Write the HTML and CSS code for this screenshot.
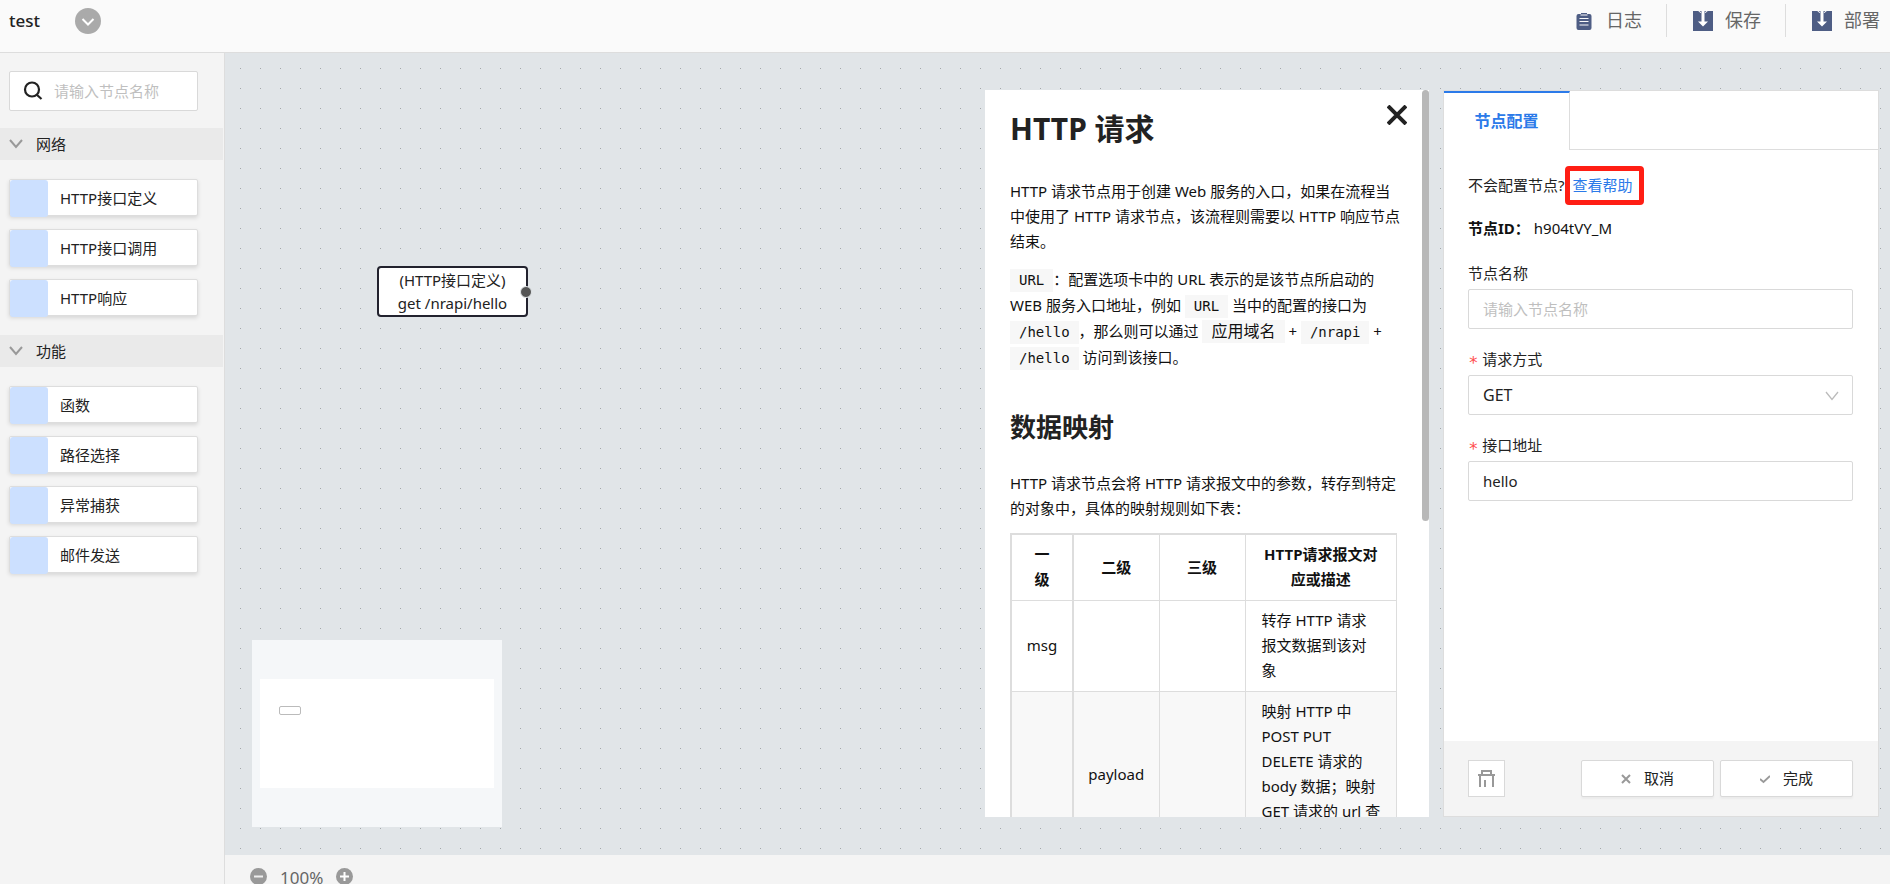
FILE: index.html
```html
<!DOCTYPE html>
<html lang="zh-CN">
<head>
<meta charset="utf-8">
<title>test</title>
<link rel="stylesheet" href="styles.css">
</head>
<body>
<header class="topbar">
  <div class="flow-title">
    <span class="flow-name">test</span>
    <button class="icon-button" aria-label="展开">
      <svg width="26" height="26" viewBox="0 0 26 26"><circle cx="13" cy="13" r="13" fill="#aaa"/><path d="M7.500 11l5.500 5.500 5.500-5.500" fill="none" stroke="#fff" stroke-width="2"/></svg>
    </button>
  </div>
  <nav class="actions">
    <button class="action action-log">
      <svg width="16" height="18" viewBox="0 0 16 18"><path d="M2.500 2H5V1h6v1h2.500A2 2 0 0 1 15.500 4v12a2 2 0 0 1-2 2h-11a2 2 0 0 1-2-2V4a2 2 0 0 1 2-2z" fill="#4e5d84"/><path d="M4.500 3h7M3.500 6.500h9M3.500 9.500h9M3.500 13h9" stroke="#fafafa" stroke-width="1.200"/></svg>
      日志
    </button>
    <button class="action">
      <svg width="20" height="20" viewBox="0 0 20 20"><path d="M0 0h20v20H0z" fill="#4e5d84"/><path d="M5.500 0Q7.500 0 7.500 2M14.500 0Q12.500 0 12.500 2" fill="none" stroke="#fafafa"/><path d="M8.500 0h3v10.500h3.500l-5 5-5-5h3.500z" fill="#fff"/></svg>
      保存
    </button>
    <button class="action">
      <svg width="20" height="20" viewBox="0 0 20 20"><path d="M0 0h20v20H0z" fill="#4e5d84"/><path d="M5.500 0Q7.500 0 7.500 2M14.500 0Q12.500 0 12.500 2" fill="none" stroke="#fafafa"/><path d="M8.500 0h3v10.500h3.500l-5 5-5-5h3.500z" fill="#fff"/></svg>
      部署
    </button>
  </nav>
</header>
<div class="workspace">
  <aside class="sidebar">
    <label class="search">
      <svg width="20" height="20" viewBox="0 0 20 20"><circle cx="9" cy="8.500" r="7" fill="none" stroke="#222" stroke-width="2.200"/><path d="M13.500 13.500l5 4.500" stroke="#222" stroke-width="2.200"/></svg>
      <input class="search-input" type="text" placeholder="请输入节点名称" aria-label="请输入节点名称">
    </label>
    <section>
      <h2 class="category"><svg width="14" height="10" viewBox="0 0 14 10"><path d="M1 1l6 7 6-7" fill="none" stroke="#999" stroke-width="2"/></svg>网络</h2>
      <ul class="node-list">
        <li class="node-item">HTTP接口定义</li>
        <li class="node-item">HTTP接口调用</li>
        <li class="node-item">HTTP响应</li>
      </ul>
    </section>
    <section>
      <h2 class="category"><svg width="14" height="10" viewBox="0 0 14 10"><path d="M1 1l6 7 6-7" fill="none" stroke="#999" stroke-width="2"/></svg>功能</h2>
      <ul class="node-list">
        <li class="node-item">函数</li>
        <li class="node-item">路径选择</li>
        <li class="node-item">异常捕获</li>
        <li class="node-item">邮件发送</li>
      </ul>
    </section>
  </aside>
  <main class="stage">
    <div class="canvas">
      <div class="flow-node"><span>(HTTP接口定义)</span><span>get /nrapi/hello</span><i class="port"></i></div>
      <div class="minimap"><div class="minimap-view"><i class="minimap-node"></i></div></div>
      <article class="help">
        <button class="icon-button help-close" aria-label="关闭">
          <svg width="20" height="20" viewBox="0 0 20 20"><path d="M1 1l18 18M19 1L1 19" stroke="#222" stroke-width="4"/></svg>
        </button>
        <div class="help-body">
          <h1 class="help-title">HTTP 请求</h1>
          <p class="help-text">HTTP 请求节点用于创建 Web 服务的入口，如果在流程当<br>中使用了 HTTP 请求节点，该流程则需要以 HTTP 响应节点<br>结束。</p>
          <p class="help-text help-text-code"><code>URL</code>：配置选项卡中的 URL 表示的是该节点所启动的<br>WEB 服务入口地址，例如 <code>URL</code> 当中的配置的接口为<br><code>/hello</code>，那么则可以通过 <code class="code-wide">应用域名</code> + <code>/nrapi</code> +<br><code>/hello</code> 访问到该接口。</p>
          <h2 class="help-subtitle">数据映射</h2>
          <p class="help-text">HTTP 请求节点会将 HTTP 请求报文中的参数，转存到特定<br>的对象中，具体的映射规则如下表：</p>
          <table class="mapping">
            <colgroup><col class="col-one"><col class="col-two"><col class="col-two"><col></colgroup>
            <thead><tr><th>一<br>级</th><th>二级</th><th>三级</th><th>HTTP请求报文对<br>应或描述</th></tr></thead>
            <tbody>
              <tr><td>msg</td><td></td><td></td><td class="desc">转存 HTTP 请求<br>报文数据到该对<br>象</td></tr>
              <tr><td></td><td>payload</td><td></td><td class="desc">映射 HTTP 中<br>POST PUT<br>DELETE 请求的<br>body 数据；映射<br>GET 请求的 url 查<br>询参数</td></tr>
            </tbody>
          </table>
        </div>
        <i class="scroll-thumb"></i>
      </article>
      <form class="config">
        <div class="tabs"><button type="button" class="tab">节点配置</button><span class="tabs-rest"></span></div>
        <div class="config-body">
          <p class="hint">不会配置节点?<a class="help-link" href="#help">查看帮助</a></p>
          <p class="node-id"><strong>节点ID：</strong><span>h904tVY_M</span></p>
          <div class="field">
            <label for="node-name">节点名称</label>
            <input class="control" id="node-name" type="text" placeholder="请输入节点名称">
          </div>
          <div class="field">
            <label class="required" for="method">请求方式</label>
            <div class="select-wrap">
              <select class="control control-select" id="method"><option>GET</option></select>
              <svg class="select-arrow" width="14" height="10" viewBox="0 0 14 10"><path d="M1 1l6 7.500 6-7.500" fill="none" stroke="#bbb" stroke-width="1.300"/></svg>
            </div>
          </div>
          <div class="field">
            <label class="required" for="path">接口地址</label>
            <input class="control" id="path" type="text" value="hello">
          </div>
        </div>
        <div class="config-footer">
          <button type="button" class="button button-trash" aria-label="删除">
            <svg width="17" height="17" viewBox="0 0 17 17" fill="none" stroke="#999" stroke-width="2"><path d="M0 5h17M4 5V1h9v4M2 5v12M15 5v12M7 10v7"/></svg>
          </button>
          <button type="button" class="button button-wide">
            <svg width="10" height="10" viewBox="0 0 10 10"><path d="M1 1l8 8M9 1L1 9" stroke="#999" stroke-width="2"/></svg>取消
          </button>
          <button type="button" class="button button-wide">
            <svg width="10" height="10" viewBox="0 0 10 10"><path d="M0 5l3.500 3L10 2" fill="none" stroke="#999" stroke-width="1.800"/></svg>完成
          </button>
        </div>
      </form>
    </div>
    <footer class="zoombar">
      <button class="icon-button" aria-label="缩小"><svg width="17" height="17" viewBox="0 0 17 17"><circle cx="8.500" cy="8.500" r="8.500" fill="#999"/><path d="M4 8.500h9" stroke="#eee" stroke-width="2"/></svg></button>
      <span class="zoom-value">100%</span>
      <button class="icon-button" aria-label="放大"><svg width="17" height="17" viewBox="0 0 17 17"><circle cx="8.500" cy="8.500" r="8.500" fill="#999"/><path d="M4 8.500h9M8.500 4v9" stroke="#fff" stroke-width="2"/></svg></button>
    </footer>
  </main>
</div>
</body>
</html>
```
FILE: styles.css
```css
* { box-sizing: border-box; }

body {
  margin: 0;
  height: 100vh;
  display: flex;
  flex-direction: column;
  overflow: hidden;
  font: 15px/25px "Noto Sans", "Noto Sans CJK SC", sans-serif;
  color: #222;
  background: #f4f4f4;
}

h1, h2, p, ul { margin: 0; padding: 0; }
button, input, select { font: inherit; color: inherit; }
svg { flex: none; display: block; }
.icon-button { border: 0; padding: 0; background: none; }

.topbar {
  flex: none;
  display: flex;
  justify-content: space-between;
  align-items: flex-start;
  height: 53px;
  padding: 4px 10px 0 9px;
  border-bottom: 1px solid #ddd;
  background: #fafafa;
}
.flow-title { display: flex; align-items: center; gap: 35px; height: 33px; }
.flow-name { font-size: 17px; font-weight: 500; }
.actions { display: flex; }
.action {
  display: flex;
  align-items: center;
  gap: 12px;
  height: 33px;
  padding: 0 0 0 26px;
  border: 0;
  background: none;
  font-size: 18px;
  color: #666;
}
.action-log { gap: 14px; }
.action + .action { border-left: 1px solid #ddd; }
.action:not(:last-child) { padding-right: 24px; }

.workspace { flex: 1; display: flex; min-height: 0; }
.sidebar { flex: none; width: 225px; border-right: 1px solid #ddd; }
.search {
  display: flex;
  align-items: center;
  gap: 11px;
  width: 189px;
  height: 40px;
  margin: 18px 0 17px 9px;
  padding-left: 13px;
  border: 1px solid #d9d9d9;
  border-radius: 2px;
  background: #fff;
}
.search-input { width: 130px; padding: 0; border: 0; outline: 0; background: none; }
::placeholder { color: #bfbfbf; opacity: 1; }
.category {
  display: flex;
  align-items: center;
  gap: 13px;
  width: 223px;
  height: 32px;
  padding-left: 9px;
  background: #eaeaea;
  font-size: 15px;
  font-weight: 400;
}
.node-list {
  display: flex;
  flex-direction: column;
  gap: 13px;
  padding: 19px 26px 19px 9px;
  list-style: none;
}
.node-item {
  display: flex;
  align-items: center;
  gap: 12px;
  height: 37px;
  padding-top: 1px;
  border: 1px solid #ddd;
  border-radius: 2px;
  background: #fff;
  box-shadow: 0 2px 4px rgba(0, 0, 0, 0.12);
}
.node-item::before {
  content: "";
  width: 38px;
  height: 37px;
  border-radius: 3px;
  background: #cce0ff;
}

.stage { flex: 1; display: flex; flex-direction: column; min-width: 0; }
.canvas {
  position: relative;
  flex: 1;
  display: flex;
  justify-content: flex-end;
  gap: 14px;
  min-height: 0;
  padding: 37px 11px 38px;
  background-color: #e1e5e8;
  background-image:
    linear-gradient(#e1e5e8 19px, transparent 19px),
    linear-gradient(90deg, #e1e5e8 19px, #a4a8ab 19px);
  background-size: 20px 20px;
  background-position: -4px -4px;
}
.flow-node {
  position: absolute;
  left: 152px;
  top: 213px;
  display: flex;
  flex-direction: column;
  align-items: center;
  width: 151px;
  padding-top: 1px;
  border: 2px solid #22222e;
  border-radius: 4px;
  background: #fff;
  line-height: 23px;
}
.port {
  position: absolute;
  right: -6px;
  top: 18px;
  width: 12px;
  height: 12px;
  border: 1px solid #e1e5e8;
  border-radius: 50%;
  background: #555;
}
.minimap {
  position: absolute;
  left: 27px;
  bottom: 28px;
  width: 250px;
  height: 187px;
  padding: 39px 8px;
  background: #f5f7f9;
}
.minimap-view { height: 109px; padding: 27px 19px; background: #fff; }
.minimap-node { display: block; width: 22px; height: 9px; border: 1px solid #bbb; border-radius: 2px; }

.help { position: relative; width: 444px; overflow: hidden; background: #fff; color: #111; white-space: nowrap; }
.help-body { padding: 14px 32px 0 25px; }
.help-close { position: absolute; right: 22px; top: 15px; }
.scroll-thumb { position: absolute; right: 0; top: 0; width: 7px; height: 431px; border-radius: 4px; background: #b8b8b8; }
.help-title { margin-bottom: 25px; font-size: 30px; line-height: 50px; color: #222; }
.help-subtitle { margin: 37px 0 24px; font-size: 26px; line-height: 40px; color: #222; }
.help-text { margin-bottom: 12px; }
.help-text-code { line-height: 26px; }
code {
  display: inline-block;
  padding: 0 9px;
  background: #f7f7f7;
  font: 14px/23px "DejaVu Sans Mono", "Noto Sans CJK SC", monospace;
}
.code-wide { font-size: 16px; }
.mapping {
  width: 100%;
  table-layout: fixed;
  border-collapse: collapse;
  border: 2px solid #ddd;
  border-right-width: 1px;
}
.col-one { width: 62px; }
.col-two { width: 86px; }
.mapping th, .mapping td { padding: 7px 0 8px; border: 1px solid #ddd; text-align: center; }
.mapping th:first-child, .mapping td:first-child { border-right-width: 2px; }
.mapping .desc { padding-left: 16px; text-align: left; }
.mapping tbody tr:nth-child(2n) { background: #f8f8f8; }

.config {
  display: flex;
  flex-direction: column;
  width: 436px;
  border: 1px solid #ddd;
  background: #fff;
}
.tabs { flex: none; display: flex; height: 59px; }
.tab {
  width: 126px;
  padding: 0;
  border: 0;
  border-top: 2px solid #2b7ae9;
  border-right: 1px solid #ddd;
  background: #fff;
  font-size: 16px;
  font-weight: 700;
  color: #2b7ae9;
}
.tabs-rest { flex: 1; border-bottom: 1px solid #ddd; }
.config-body { flex: 1; padding: 16px 25px 0 24px; }
.hint { display: flex; align-items: center; height: 39px; }
.help-link {
  padding: 2px 6px 2px 3px;
  border: 5px solid #ff1e14;
  border-radius: 4px;
  text-decoration: none;
  color: #2b7ae9;
}
.node-id { display: flex; gap: 4px; margin: 11px 0 20px; color: #111; }
.field { margin-bottom: 18px; }
.field label { display: block; height: 28px; }
.required::before {
  content: "∗";
  margin-right: 4px;
  font-family: "DejaVu Sans Mono", monospace;
  font-size: 17px;
  line-height: 1;
  color: #ff4d4f;
}
.control {
  display: block;
  width: 100%;
  height: 40px;
  padding: 0 14px;
  border: 1px solid #d9d9d9;
  border-radius: 2px;
  outline: 0;
  background: #fff;
}
.select-wrap { position: relative; }
.control-select { appearance: none; font-size: 16px; }
.select-arrow { position: absolute; right: 14px; top: 16px; pointer-events: none; }
.config-footer {
  flex: none;
  display: flex;
  gap: 6px;
  padding: 19px 25px 19px 24px;
  background: #f4f4f4;
}
.button {
  display: flex;
  align-items: center;
  justify-content: center;
  gap: 13px;
  height: 37px;
  padding: 0;
  border: 1px solid #d9d9d9;
  border-radius: 2px;
  background: #fff;
}
.button-trash { width: 37px; margin-right: auto; border-radius: 0; }
.button-wide { width: 133px; box-shadow: 0 2px 2px rgba(0, 0, 0, 0.04); }

.zoombar {
  flex: none;
  display: flex;
  align-items: flex-start;
  gap: 13px;
  height: 29px;
  padding: 13px 0 0 25px;
  overflow: hidden;
}
.zoom-value { font-size: 17px; line-height: 20px; color: #666; }
```
